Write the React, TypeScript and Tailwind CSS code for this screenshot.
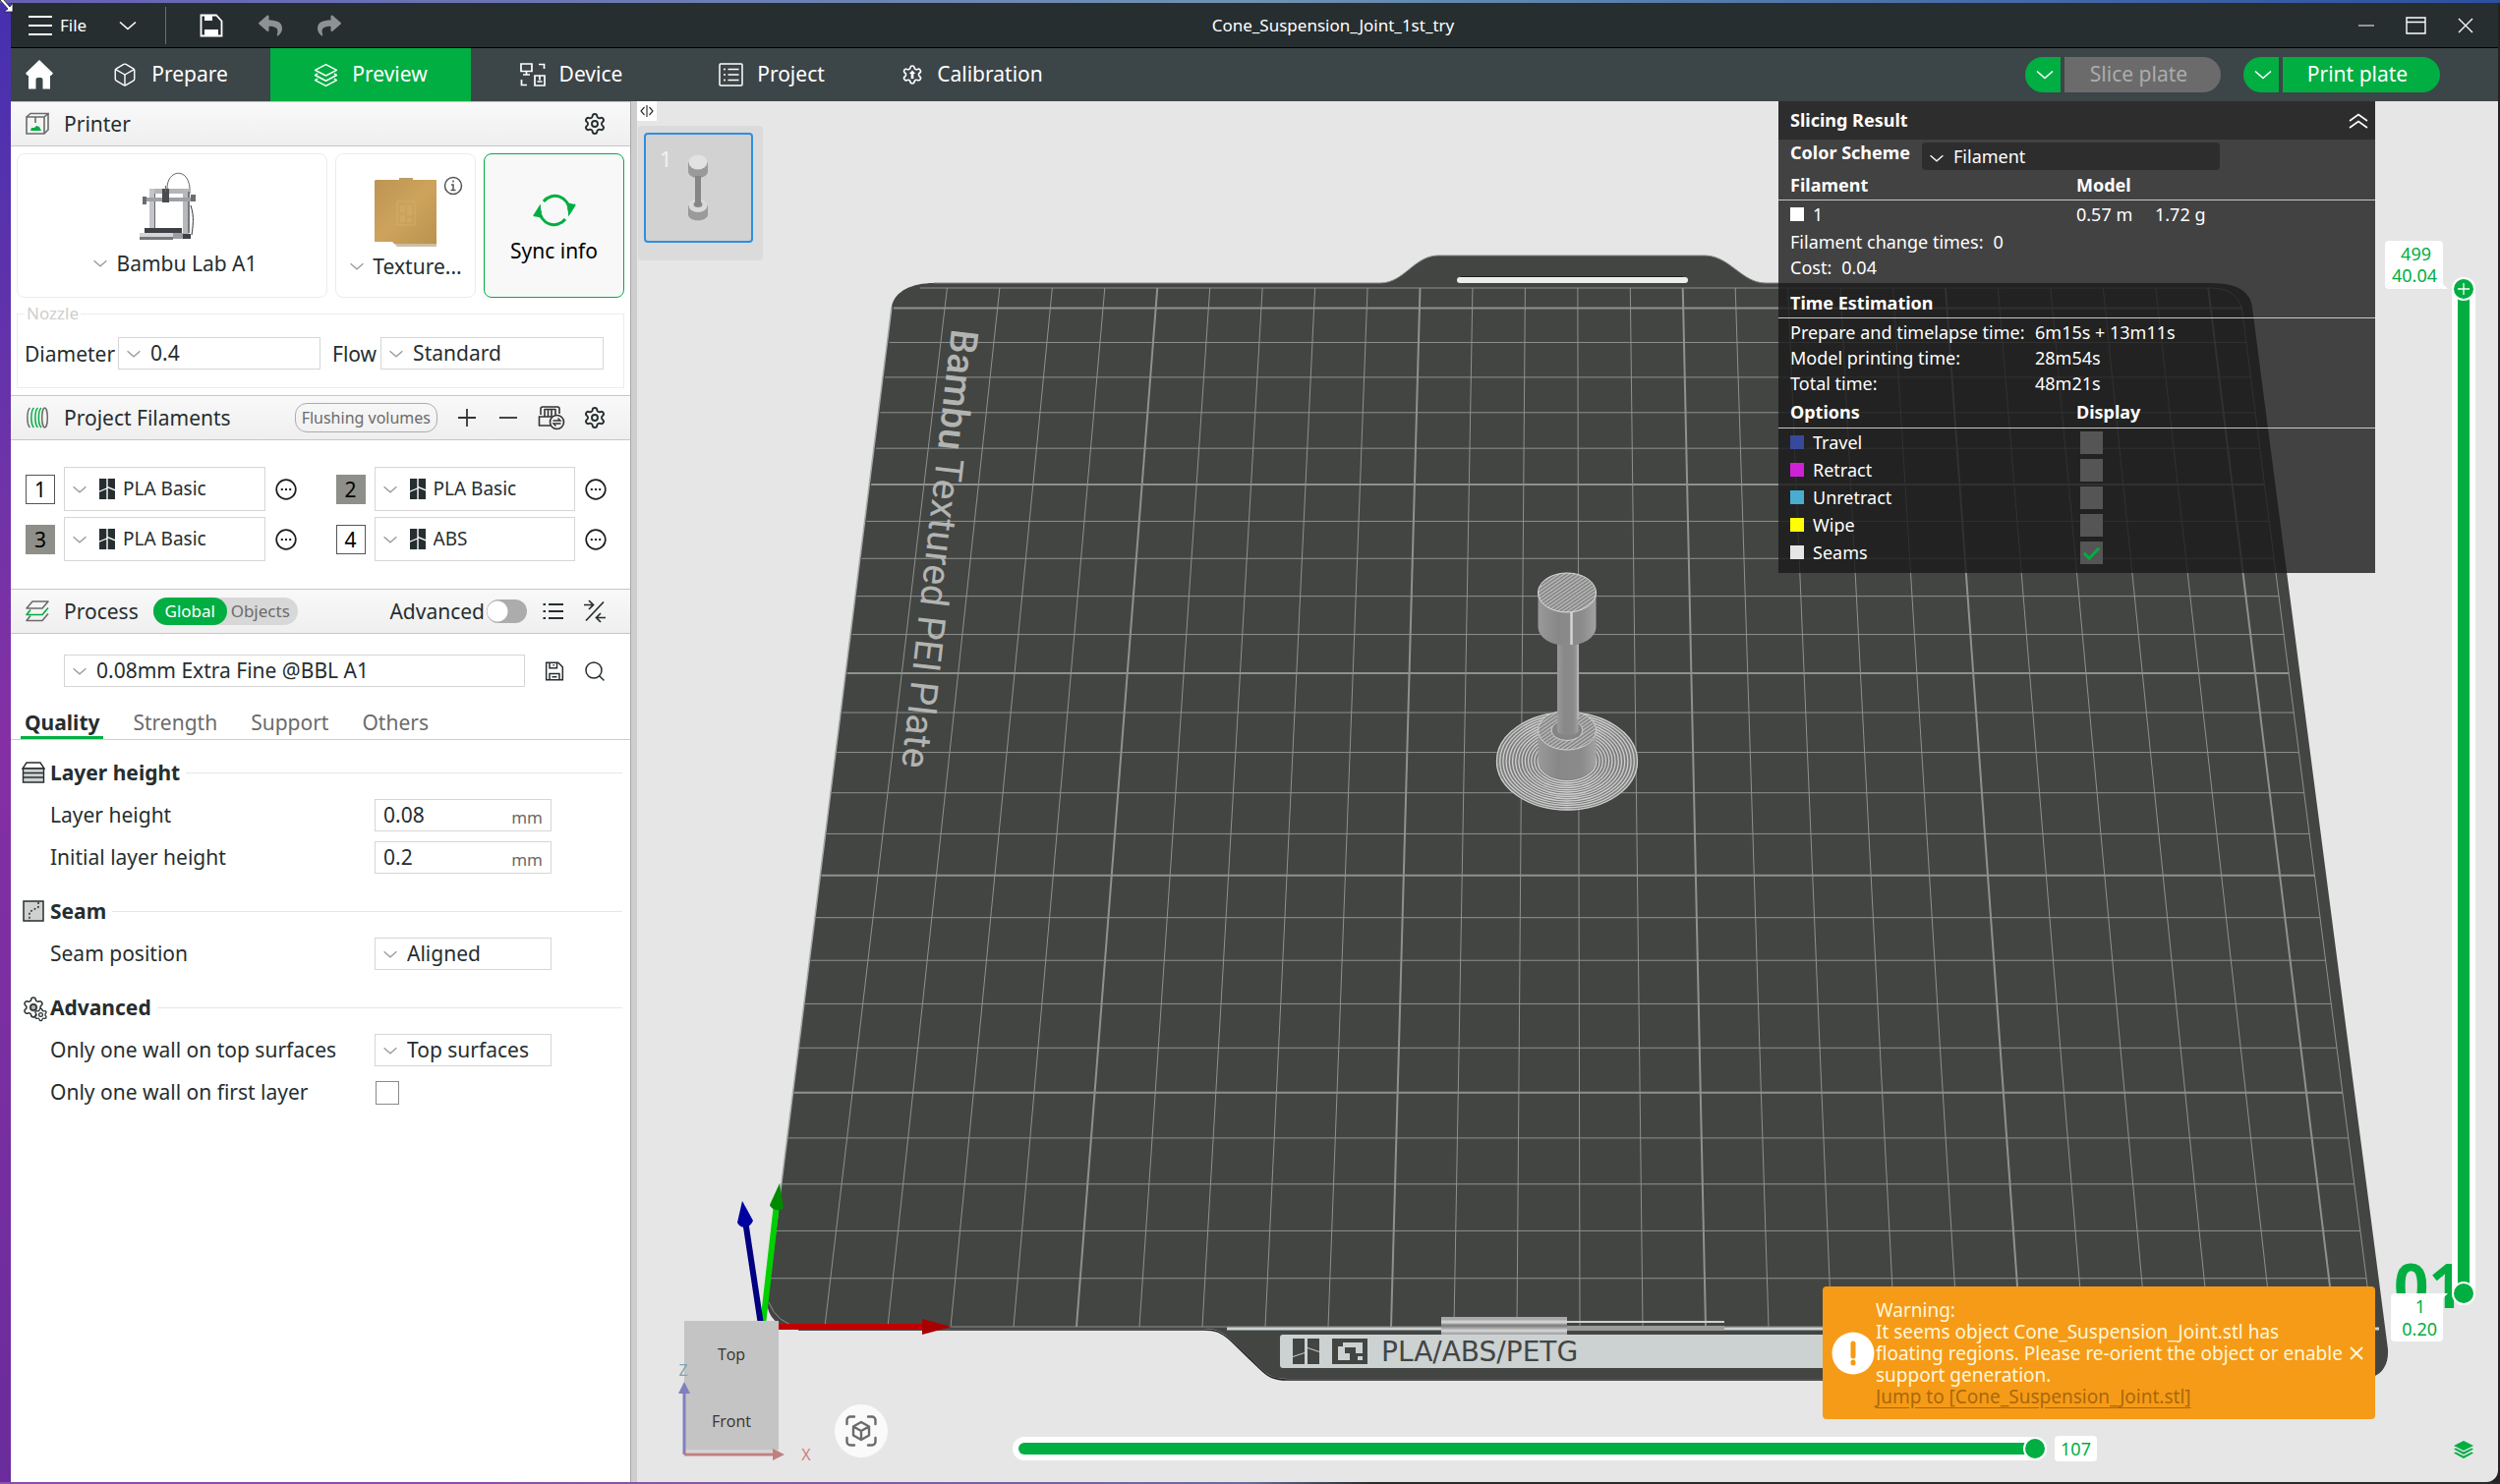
import { useState, type ReactNode } from "react";
import { Box, Search, Settings } from "lucide-react";
import { FaReply, FaShare } from "react-icons/fa";
import clsx from "clsx";

type IconProps = { className?: string };

function ChevronIcon({ className }: IconProps) {
  return (
    <svg viewBox="0 0 18 10" className={className} fill="none" stroke="currentColor" strokeWidth={1.6}>
      <path d="M1 1.5 9 8.5 17 1.5" />
    </svg>
  );
}

function FloppyIcon({ className }: IconProps) {
  return (
    <svg viewBox="0 0 24 24" className={className} fill="none" stroke="currentColor" strokeWidth={1.8}>
      <path d="M2 1.5h14.5L22 7v15.5H2zM6 1.5V8h9V1.5M6 22.5V15h12v7.5" />
      <path d="M11 3.5v2M9 19h6" />
    </svg>
  );
}

function HomeIcon({ className }: IconProps) {
  return (
    <svg viewBox="0 0 28 30" className={className} fill="currentColor">
      <path d="M14 0 28 13.500 26 16h-1v13.500h-7.500V20a2 2 0 0 0-2-2h-3a2 2 0 0 0-2 2v9.500H3V16H2L0 13.500z" />
    </svg>
  );
}

function LayersIcon({ className }: IconProps) {
  return (
    <svg viewBox="0 0 24 24" className={className} fill="none" stroke="currentColor" strokeWidth={1.4} strokeLinejoin="round">
      <path d="M12 1.500 22.500 7 12 12.500 1.500 7z" />
      <path d="M4 10.500 1.500 12 12 17.500 22.500 12 20 10.500M4 15.500 1.500 17 12 22.500 22.500 17 20 15.500" />
    </svg>
  );
}

function DeviceIcon({ className }: IconProps) {
  return (
    <svg viewBox="0 0 26 24" className={className} fill="none" stroke="currentColor" strokeWidth={1.7}>
      <path d="M1 1h11v7.500H1zM6.500 8.500V12M3 12h7M19 1.500h5.500V6M1.500 17v5.500H7M15 13h10v10H15zM20 13v4.500M17.500 19h5" />
    </svg>
  );
}

function ProjectIcon({ className }: IconProps) {
  return (
    <svg viewBox="0 0 25 24" className={className} fill="none" stroke="currentColor" strokeWidth={1.5}>
      <rect x="1" y="1" width="23" height="22" rx="1" />
      <path d="M9.500 6.500h11M9.500 12h11M9.500 17.500h11M5 6.500h2M5 12h2M5 17.500h2" />
    </svg>
  );
}

function CalibrationIcon({ className }: IconProps) {
  return (
    <svg viewBox="0 0 24 24" className={className} fill="none" stroke="currentColor" strokeWidth={1.8} strokeLinejoin="round">
      <path d="M9.700 4.100a2.340 2.340 0 0 1 4.600 0 2.340 2.340 0 0 0 3.400 1.900 2.340 2.340 0 0 1 2.300 4.100 2.340 2.340 0 0 0 0 3.800 2.340 2.340 0 0 1-2.300 4.100 2.340 2.340 0 0 0-3.400 1.900 2.340 2.340 0 0 1-4.600 0A2.340 2.340 0 0 0 6.300 18 2.340 2.340 0 0 1 4 13.900a2.340 2.340 0 0 0 0-3.800A2.340 2.340 0 0 1 6.300 6a2.340 2.340 0 0 0 3.400-1.900" />
      <path d="M12 16.500V10" strokeWidth={3} />
      <path d="M12 7l3.500 4h-7z" fill="currentColor" stroke="none" />
    </svg>
  );
}

function PrinterIcon({ className }: IconProps) {
  return (
    <svg viewBox="0 0 24 24" className={className} fill="none" stroke="#6b6b6b" strokeWidth={1.6}>
      <path d="M1 5h18v17H1zM1 5l4-3.500h18L19 5M23 1.500V18l-4 4M10 5v6" />
      <path d="M5 19h11l-2-4-3-1-2 2H6z" fill="#00ae42" stroke="none" />
    </svg>
  );
}

function FilamentsIcon({ className }: IconProps) {
  return (
    <svg viewBox="0 0 24 24" className={className} fill="none" strokeWidth={1.5}>
      <path d="M4.500 2C1 5 1 19 4.500 22" stroke="#6b6b6b" />
      <path d="M8.500 2C5 5 5 19 8.500 22M12.500 2C9 5 9 19 12.500 22M16 2c-3.500 3-3.500 17 0 20" stroke="#00ae42" />
      <ellipse cx="19.500" cy="12" rx="2.800" ry="10" stroke="#6b6b6b" />
    </svg>
  );
}

function ProcessIcon({ className }: IconProps) {
  return (
    <svg viewBox="0 0 24 22" className={className} fill="none" strokeWidth={1.6} strokeLinejoin="round">
      <path d="M7 1h16l-6 7H1z" stroke="#6b6b6b" />
      <path d="M5 9.500 1 14.500h16l6-7" stroke="#00ae42" />
      <path d="M5 15.500 1 20.500h16l6-7" stroke="#6b6b6b" />
    </svg>
  );
}

function AmsIcon({ className }: IconProps) {
  return (
    <svg viewBox="0 0 28 26" className={className} fill="none" stroke="#333" strokeWidth={1.6}>
      <path d="M3 10V4a2 2 0 0 1 2-2h15a2 2 0 0 1 2 2v5M7 4.500h11M7 4v8M10.500 4v8M14 4v8M18 4v6M14 21H1.500V12H14" />
      <circle cx="19.500" cy="17.500" r="7" />
      <path d="M15.500 16h7.500l-2.500-2.500M23.500 19H16l2.500 2.500" strokeWidth={1.4} />
    </svg>
  );
}

function MoreIcon({ className }: IconProps) {
  return (
    <svg viewBox="0 0 22 22" className={className} fill="none" stroke="#1e1e1e" strokeWidth={1.7}>
      <circle cx="11" cy="11" r="9.800" />
      <path d="M5.800 11h2M10 11h2M14.200 11h2" strokeWidth={2} />
    </svg>
  );
}

function ListIcon({ className }: IconProps) {
  return (
    <svg viewBox="0 0 22 20" className={className} fill="none" stroke="#262e30" strokeWidth={1.8}>
      <path d="M6 3h15M6 10h15M6 17h15M.5 3h2.500M.5 10h2.500M.5 17h2.500" />
    </svg>
  );
}

function CompareIcon({ className }: IconProps) {
  return (
    <svg viewBox="0 0 24 24" className={className} fill="none" stroke="#262e30" strokeWidth={1.7}>
      <path d="M21 2.500 3 21.500M1 5.500h9M6 1l4.500 4.500L6 10M23 18.500h-9M18 14l-4.500 4.500L18 23" />
    </svg>
  );
}

function BambuMark({ className }: IconProps) {
  return (
    <svg viewBox="0 0 16 21" className={className} fill="#262e30">
      <path d="M0 0h7.300v9.500L0 12.500zM0 13.800l7.300-3V21H0zM8.700 0H16v11L8.700 8zM8.700 9.500 16 12.500V21H8.700z" />
    </svg>
  );
}

function SyncIcon({ className }: IconProps) {
  return (
    <svg viewBox="0 0 44 38" className={className} fill="none" stroke="#00ae42" strokeWidth={3}>
      <path d="M11 10a14.500 14.500 0 0 1 26 9" />
      <path d="M33 28a14.500 14.500 0 0 1-26-9" />
      <path d="M43 13l-6 9.500-1-11M1 25l6-9.500 1 11" strokeWidth={2} fill="#00ae42" />
    </svg>
  );
}

function PrinterPicture({ className }: IconProps) {
  return (
    <svg viewBox="0 0 58 70" className={className}>
      <path d="M29 18C28-4 54-6 52 22" fill="none" stroke="#666" strokeWidth="1" />
      <path d="M53 34c4 12 2 22 1 30" fill="none" stroke="#333" strokeWidth="1" />
      <path d="M11 17h41v5H11z" fill="#b4b5b9" />
      <path d="M11 17h5v42h-5z" fill="#c4c5c9" />
      <path d="M16 22h1v36h-1z" fill="#66676b" />
      <path d="M45 17h6v46h-6z" fill="#b7b8bc" />
      <path d="M50 20h2v42h-2z" fill="#77787d" />
      <path d="M5 26h50v4H5z" fill="#9fa0a5" />
      <path d="M24 17h7v14h-7z" fill="#4a4b50" />
      <path d="M27 14h1v6h-1zM4 25h4v8H4zM53 23h5v7h-5z" fill="#6b6c70" />
      <path d="M6 57h38v5H6zM34 57h10v6H34zM43 63h10v5H43z" fill="#3e4045" />
      <path d="M1 62h34v6H1z" fill="#d3d4d8" />
      <path d="M1 66h34v3H1z" fill="#76777c" />
      <path d="M35 62h10v6H35z" fill="#9c9da2" />
    </svg>
  );
}

function PlatePicture({ className }: IconProps) {
  return (
    <svg viewBox="0 0 64 70" className={className}>
      <defs>
        <linearGradient id="pei" x1="0" y1="0" x2="1" y2="1">
          <stop offset="0" stopColor="#bd9452" />
          <stop offset=".5" stopColor="#cda35c" />
          <stop offset="1" stopColor="#bb924f" />
        </linearGradient>
      </defs>
      <path d="M25 0h14v4H25z" fill="#b99e6c" />
      <path d="M1 2h62v65H20l-2-2H0V3z" fill="url(#pei)" />
      <path d="M20 67h43v3H23z" fill="#cbbfa6" />
      <path d="M23 24h18v24H23z" fill="none" stroke="#d3ad6a" strokeWidth="1" />
      <path d="M26 28h5v7h-5zM33 28h5v10h-5zM26 38h5v7h-5zM33 41h5v4h-5z" fill="#d0a864" />
    </svg>
  );
}

/* ---------- form bits ---------- */

type PickProps = {
  label: string;
  value: string;
  className?: string;
  mark?: boolean;
};

function Pick({ label, value, className, mark }: PickProps) {
  return (
    <div className={clsx("relative", className)}>
      <select
        aria-label={label}
        className={clsx(
          "h-full w-full appearance-none border border-[#d6d6d6] bg-white pb-0.5 text-[#262e30] outline-none",
          mark ? "pl-[59px] text-[19px]" : "pl-8 text-[21px]",
        )}
      >
        <option>{value}</option>
      </select>
      <span className="pointer-events-none absolute inset-y-0 left-2 flex items-center gap-3">
        <ChevronIcon className="h-2 w-4 text-[#9a9a9a]" />
        {mark && <BambuMark className="h-[21px] w-4" />}
      </span>
    </div>
  );
}

function PanelHeader({ icon, title, children }: { icon: ReactNode; title: string; children?: ReactNode }) {
  return (
    <div className="flex h-[46px] items-center border-y border-[#c6c6c6] bg-linear-to-b from-[#f9f9f9] to-[#efefef] pr-6 pl-[15px]">
      {icon}
      <h2 className="ml-[15px]">{title}</h2>
      {children}
    </div>
  );
}

function Filament({ slot, name, dark }: { slot: number; name: string; dark?: boolean }) {
  return (
    <div className="flex h-[45px] items-center">
      <span
        className={clsx(
          "flex size-[30px] items-center justify-center border text-black",
          dark ? "border-[#8e8f88] bg-[#8e8f88]" : "border-[#555] bg-white",
        )}
      >
        {slot}
      </span>
      <Pick label={`Filament ${slot}`} value={name} mark className="ml-[9px] h-full flex-1" />
      <button type="button" aria-label={`Edit filament ${slot}`} className="ml-2.5">
        <MoreIcon className="size-[22px]" />
      </button>
    </div>
  );
}

function GroupTitle({ icon, title }: { icon: ReactNode; title: string }) {
  return (
    <div className="mb-1.5 flex h-8 items-center">
      <span className="flex w-[29px]">{icon}</span>
      <h3 className="font-bold">{title}</h3>
      <div className="ml-1.5 h-px flex-1 bg-[#e6e6e6]" />
    </div>
  );
}

function SettingRow({ label, htmlFor, children }: { label: string; htmlFor?: string; children: ReactNode }) {
  return (
    <div className="flex h-[43px] items-center">
      <label htmlFor={htmlFor} className="w-[359px] pb-0.5 pl-[29px]">
        {label}
      </label>
      {children}
    </div>
  );
}

function NumberField({ id, value }: { id: string; value: string }) {
  return (
    <div className="flex h-[33px] w-[180px] items-center border border-[#d6d6d6] pr-2 pl-2">
      <input id={id} defaultValue={value} className="w-full min-w-0 flex-1 pb-0.5 outline-none" />
      <span className="pt-1 text-[17px] text-[#6b6b6b]">mm</span>
    </div>
  );
}

/* ---------- top bars ---------- */

function TitleBar() {
  return (
    <header className="flex h-[46px] items-center border-b border-black bg-[#262e30] text-white">
      <div className="flex w-[360px] items-center">
        <button type="button" className="ml-[18px] flex items-center gap-2 text-[17px]">
          <svg viewBox="0 0 24 20" className="h-5 w-6" stroke="currentColor" strokeWidth={2}>
            <path d="M0 1h24M0 10h24M0 19h24" />
          </svg>
          File
        </button>
        <button type="button" aria-label="More menus" className="ml-[33px]">
          <ChevronIcon className="h-2.5 w-[18px]" />
        </button>
        <div className="ml-[29px] h-[38px] w-px bg-[#6b7072]" />
        <button type="button" aria-label="Save" className="ml-[34px]">
          <svg viewBox="0 0 24 24" className="size-6" fill="none" stroke="currentColor" strokeWidth={1.8}>
            <path d="M1.500 1.500H17l5.500 6v15h-21z" />
            <path d="M5 2h8v5H5zM5 16h14v6H5z" fill="currentColor" stroke="none" />
          </svg>
        </button>
        <button type="button" aria-label="Undo" className="ml-9 text-[#8e9294]">
          <FaReply size={24} />
        </button>
        <button type="button" aria-label="Redo" className="ml-9 text-[#8e9294]">
          <FaShare size={24} />
        </button>
      </div>
      <h1 className="flex-1 text-center text-[17px]">Cone_Suspension_Joint_1st_try</h1>
      <div className="flex w-[200px] items-center gap-8 pl-[58px]">
        <button type="button" aria-label="Minimize">
          <svg viewBox="0 0 16 16" className="size-4" stroke="currentColor">
            <path d="M0 8h16" />
          </svg>
        </button>
        <button type="button" aria-label="Maximize">
          <svg viewBox="0 0 21 18" className="h-[18px] w-[21px]" fill="none" stroke="currentColor" strokeWidth={1.4}>
            <path d="M1 1h19v16H1zM1 5.500h19" />
          </svg>
        </button>
        <button type="button" aria-label="Close">
          <svg viewBox="0 0 16 16" className="size-4" stroke="currentColor" strokeWidth={1.3}>
            <path d="M1 1l14 14M15 1 1 15" />
          </svg>
        </button>
      </div>
    </header>
  );
}

const navTabs = [
  { name: "Prepare", icon: <Box className="size-[26px]" strokeWidth={1.3} /> },
  { name: "Preview", icon: <LayersIcon className="size-[25px]" /> },
  { name: "Device", icon: <DeviceIcon className="h-6 w-[26px]" /> },
  { name: "Project", icon: <ProjectIcon className="h-6 w-[25px]" /> },
  { name: "Calibration", icon: <CalibrationIcon className="size-[22px]" /> },
];

function NavBar() {
  return (
    <nav className="flex h-[54px] items-center bg-[#3c4547] text-[21px] text-white">
      <button type="button" aria-label="Home" className="w-[60px] pl-[15px]">
        <HomeIcon className="h-[30px] w-7" />
      </button>
      {navTabs.map((tab) => (
        <button
          key={tab.name}
          type="button"
          className={clsx(
            "flex h-full w-[204px] items-center justify-center gap-3.5",
            tab.name === "Preview" && "bg-[#00ae42]",
          )}
        >
          {tab.icon}
          {tab.name}
        </button>
      ))}
      <div className="mr-[59px] ml-auto flex h-9 gap-[23px]">
        <div className="flex gap-1">
          <button type="button" aria-label="Slice options" className="flex w-9 items-center justify-center rounded-l-full bg-[#00ae42] pl-1">
            <ChevronIcon className="h-2.5 w-5" />
          </button>
          <button type="button" disabled className="w-[159px] rounded-r-full bg-[#6b6b6b] pr-2 text-[#acacac]">
            Slice plate
          </button>
        </div>
        <div className="flex gap-1">
          <button type="button" aria-label="Print options" className="flex w-9 items-center justify-center rounded-l-full bg-[#00ae42] pl-1">
            <ChevronIcon className="h-2.5 w-5" />
          </button>
          <button type="button" className="w-40 rounded-r-full bg-[#00ae42] pr-2">
            Print plate
          </button>
        </div>
      </div>
    </nav>
  );
}

/* ---------- sidebar ---------- */

const processTabs = ["Quality", "Strength", "Support", "Others"];

function Sidebar() {
  const [processTab, setProcessTab] = useState("Quality");

  return (
    <aside className="w-[631px] shrink-0 border-r border-[#a8a8a8] bg-white text-[21px] leading-7 text-[#262e30]">
      <PanelHeader icon={<PrinterIcon className="size-6" />} title="Printer">
        <button type="button" aria-label="Printer settings" className="ml-auto">
          <Settings className="size-6" strokeWidth={1.9} />
        </button>
      </PanelHeader>

      <div className="flex h-[154px] gap-2 px-1.5 pt-[7px]">
        <button type="button" className="flex flex-1 flex-col items-center rounded-lg border border-[#ececec] pt-[18px]">
          <PrinterPicture className="mr-2.5 h-[70px] w-[58px]" />
          <span className="mt-[9px] ml-1.5 flex items-center gap-2">
            <ChevronIcon className="h-2 w-4 text-[#9a9a9a]" />
            Bambu Lab A1
          </span>
        </button>
        <button type="button" className="relative flex w-[143px] flex-col items-center rounded-lg border border-[#ececec] pt-6">
          <PlatePicture className="h-[70px] w-16" />
          <svg viewBox="0 0 20 20" className="absolute top-[22px] right-3 size-5" fill="none" stroke="#555" strokeWidth={1.5}>
            <circle cx="10" cy="10" r="8.500" />
            <path d="M10 4.500v2M8 9h2v5M7.500 14.500h5" />
          </svg>
          <span className="mt-1.5 flex items-center gap-2">
            <ChevronIcon className="h-2 w-4 text-[#9a9a9a]" />
            Texture...
          </span>
        </button>
        <button type="button" className="flex w-[143px] flex-col items-center rounded-lg border border-[#00ae42] bg-[#f8f8f8] pt-[38px] text-black">
          <SyncIcon className="h-[38px] w-11" />
          <span className="mt-2">Sync info</span>
        </button>
      </div>

      <fieldset className="mx-1.5 mt-1 mb-[7px] h-[88px] border border-[#ececec] pl-[7px]">
        <legend className="px-0.5 text-[17px] leading-6 text-[#cecece]">Nozzle</legend>
        <div className="flex items-center pt-3">
          <span className="w-[95px]">Diameter</span>
          <Pick label="Diameter" value="0.4" className="h-[33px] w-[206px]" />
          <span className="mr-1 ml-3">Flow</span>
          <Pick label="Flow" value="Standard" className="mr-5 h-[33px] flex-1" />
        </div>
      </fieldset>

      <PanelHeader icon={<FilamentsIcon className="size-6" />} title="Project Filaments">
        <button type="button" className="ml-auto h-[30px] rounded-xl border border-[#acacac] px-1.5 text-[16px] text-[#6b6b6b]">
          Flushing volumes
        </button>
        <button type="button" aria-label="Add filament" className="ml-5">
          <svg viewBox="0 0 20 20" className="size-5" stroke="#333" strokeWidth={1.8}>
            <path d="M1 10h18M10 1v18" />
          </svg>
        </button>
        <button type="button" aria-label="Remove filament" className="ml-[22px]">
          <svg viewBox="0 0 20 20" className="size-5" stroke="#333" strokeWidth={1.8}>
            <path d="M1 10h18" />
          </svg>
        </button>
        <button type="button" aria-label="Sync filaments" className="ml-5">
          <AmsIcon className="h-[26px] w-7" />
        </button>
        <button type="button" aria-label="Filament settings" className="ml-[18px]">
          <Settings className="size-6" strokeWidth={1.9} />
        </button>
      </PanelHeader>

      <div className="grid grid-cols-2 gap-x-10 gap-y-1.5 pt-[27px] pr-6 pb-7 pl-[15px]">
        <Filament slot={1} name="PLA Basic" />
        <Filament slot={2} name="PLA Basic" dark />
        <Filament slot={3} name="PLA Basic" dark />
        <Filament slot={4} name="ABS" />
      </div>

      <PanelHeader icon={<ProcessIcon className="h-[22px] w-6" />} title="Process">
        <div className="ml-[15px] flex h-7 rounded-full bg-[#d8d8d8] text-[17px]">
          <button type="button" className="w-[75px] rounded-full bg-[#00ae42] text-white">
            Global
          </button>
          <button type="button" className="w-[72px] pr-1">
            <span className="text-[#6b6b6b]">Objects</span>
          </button>
        </div>
        <label htmlFor="advanced" className="ml-auto">
          Advanced
        </label>
        <input
          id="advanced"
          type="checkbox"
          role="switch"
          className="ml-0.5 h-6 w-[41px] appearance-none rounded-full bg-[#acacac] bg-[radial-gradient(circle_at_11px_12px,white_10px,transparent_11px)]"
        />
        <button type="button" aria-label="Compare list" className="ml-4">
          <ListIcon className="h-5 w-[22px]" />
        </button>
        <button type="button" aria-label="Compare presets" className="ml-[19px]">
          <CompareIcon className="size-6" />
        </button>
      </PanelHeader>

      <div className="flex items-center pt-[21px] pr-6 pl-[54px]">
        <Pick label="Process preset" value="0.08mm Extra Fine @BBL A1" className="h-[33px] flex-1" />
        <button type="button" aria-label="Save preset" className="ml-5">
          <FloppyIcon className="size-5" />
        </button>
        <button type="button" aria-label="Search settings" className="ml-[19px]">
          <Search className="size-6" strokeWidth={1.5} />
        </button>
      </div>

      <div className="flex h-[54px] items-end gap-[26px] border-b border-[#cecece] pl-2.5">
        {processTabs.map((name) => (
          <button
            key={name}
            type="button"
            onClick={() => setProcessTab(name)}
            className={clsx(
              "border-b-[3px] px-1 leading-7",
              name === processTab ? "border-[#00ae42] font-bold" : "border-transparent text-[#6b6b6b]",
            )}
          >
            {name}
          </button>
        ))}
      </div>

      <div className="flex flex-col gap-[17px] pt-[17px] pr-2 pl-[11px]">
        <section>
          <GroupTitle
            title="Layer height"
            icon={
              <svg viewBox="0 0 24 22" className="h-[22px] w-6" fill="#d0d0d0" stroke="#262e30" strokeWidth={1.4}>
                <path d="M5 1h14l4 6H1z" fill="#fff" />
                <path d="M1.500 7h21v4.500h-21zM1.500 11.500h21V16h-21zM1.500 16h21v5h-21z" />
              </svg>
            }
          />
          <SettingRow label="Layer height" htmlFor="layer-height">
            <NumberField id="layer-height" value="0.08" />
          </SettingRow>
          <SettingRow label="Initial layer height" htmlFor="initial-layer-height">
            <NumberField id="initial-layer-height" value="0.2" />
          </SettingRow>
        </section>

        <section>
          <GroupTitle
            title="Seam"
            icon={
              <svg viewBox="0 0 22 22" className="ml-px size-[22px]" fill="#d0d0d0" stroke="#262e30" strokeWidth={1.5}>
                <rect x="1" y="1" width="20" height="20" />
                <path d="M16 2v5l-9 5v9" fill="none" strokeDasharray="2 2" />
              </svg>
            }
          />
          <SettingRow label="Seam position">
            <Pick label="Seam position" value="Aligned" className="h-[33px] w-[180px]" />
          </SettingRow>
        </section>

        <section>
          <GroupTitle
            title="Advanced"
            icon={
              <span className="relative flex">
                <svg viewBox="0 0 24 24" className="size-6">
                  <circle cx="12" cy="12" r="4.500" fill="#b0b0b0" />
                  <Settings size={24} strokeWidth={1.5} />
                </svg>
                <Settings className="absolute top-3 left-3 size-[15px] fill-white" strokeWidth={2} />
              </span>
            }
          />
          <SettingRow label="Only one wall on top surfaces">
            <Pick label="Only one wall on top surfaces" value="Top surfaces" className="h-[33px] w-[180px]" />
          </SettingRow>
          <SettingRow label="Only one wall on first layer" htmlFor="one-wall-first">
            <input id="one-wall-first" type="checkbox" className="ml-px size-6 appearance-none border border-[#8a8a8a] bg-white" />
          </SettingRow>
        </section>
      </div>
    </aside>
  );
}

/* ---------- 3D scene ---------- */

const PLATE_TOP = 293;
const PLATE_BOTTOM = 1350;
const PLATE_UNITS = 25.6;

// screen x of grid column i on the far and the near edge
const farX = (i: number) => 910 + 53.45 * i;
const nearX = (i: number) => 775 + 64 * i;

// screen y of grid row i, counted from the near edge
const rowY = (i: number) => {
  const v = PLATE_UNITS - i;
  return (292.7 + 32.6 * v) / (1 - 0.00644 * v);
};

const xAt = (i: number, y: number) => {
  const t = (y - PLATE_TOP) / (PLATE_BOTTOM - PLATE_TOP);
  return farX(i) + t * (nearX(i) - farX(i));
};

const gridLines = Array.from({ length: 25 }, (_, i) => i + 1);
const brim = Array.from({ length: 14 }, (_, i) => i);

function Scene() {
  return (
    <svg viewBox="648 103 1893 1405" className="absolute inset-0 size-full">
      <defs>
        <pattern id="infill" width="3" height="3" patternUnits="userSpaceOnUse" patternTransform="rotate(-35)">
          <rect width="3" height="3" fill="#b9b9b9" />
          <rect width="3" height="1.300" fill="#787878" />
        </pattern>
        <linearGradient id="wall" x1="0" x2="1">
          <stop offset="0" stopColor="#999" />
          <stop offset=".35" stopColor="#888" />
          <stop offset=".75" stopColor="#8b8b8b" />
          <stop offset="1" stopColor="#a2a2a2" />
        </linearGradient>
      </defs>

      <path
        d="M950 288H1404C1428 288 1438 261 1462 260H1735C1760 261 1772 288 1796 288H2247C2272 288 2289 294 2291 313L2429 1373C2430 1392 2420 1403 2402 1403H1310C1296 1403 1290 1400 1282 1392L1252 1363C1242 1354 1236 1352 1225 1352H812C792 1352 780 1340 780 1323L907 312C910 296 928 288 950 288Z"
        fill="#434543"
      />
      <path d="M907 312 780 1323" stroke="#a6aaaa" strokeWidth="1.500" />
      <path d="M950 288H1404C1428 288 1438 261 1462 260H1735C1760 261 1772 288 1796 288H1809" fill="none" stroke="#858886" />
      <path d="M812 1353H1225C1236 1353 1242 1355 1252 1364L1282 1393C1290 1401 1296 1404 1310 1404H2400" fill="none" stroke="#222" strokeWidth="1.500" />
      <rect x="1482" y="282" width="235" height="6" rx="3" fill="#eceeee" />
      <path d="M1486 281.500h226" stroke="#1f201f" />

      <g fill="none" stroke="#8f9190">
        {gridLines.map((i) => (
          <path key={i} d={`M${farX(i)} ${PLATE_TOP}L${nearX(i)} ${PLATE_BOTTOM}`} strokeWidth={i % 5 ? 1 : 2} />
        ))}
        {gridLines.map((i) => {
          const y = rowY(i);
          return <path key={i} d={`M${xAt(0.03, y)} ${y}H${xAt(PLATE_UNITS, y)}`} strokeWidth={i % 5 ? 1 : 2} />;
        })}
        <path d={`M936 293H2250Q2278 294 2281 318L${xAt(PLATE_UNITS, 1350)} 1350H812Q790 1346 782 1325`} />
      </g>

      <text transform="translate(968 334) rotate(96.500)" fontFamily="Roboto, sans-serif" fontSize="39" fill="#b2b4b2">
        <tspan fontWeight="500">Bambu</tspan> Textured PEI Plate
      </text>

      {/* front label strip */}
      <path d="M1248 1352H2420" stroke="#ccd1d2" strokeWidth="3" />
      <rect x="1302" y="1358" width="1100" height="34" rx="3" fill="#ccd1d2" />
      <path d="M1466 1340h128v18h-128z" fill="#a9a9a9" />
      <path d="M1466 1345h128M1466 1354h128" stroke="#d0d0d0" strokeWidth="3" />
      <path d="M1466 1349h128" stroke="#858585" strokeWidth="3" />
      <path d="M1594 1345h160" stroke="#d0d0d0" strokeWidth="2" />
      <path d="M1594 1351.500h160" stroke="#9a9c9a" strokeWidth="5" />
      <path d="M1315 1362h12v14l-12 4zM1315 1381l12-4v11h-12zM1330 1362h12v13l-12-4zM1330 1372l12 4v12h-12z" fill="#434543" />
      <path d="M1355 1362h36v26h-36z" fill="#434543" />
      <path d="M1366 1366h20v11h-7v7h-18v-14h5z" fill="#ccd1d2" />
      <path d="M1368 1371h11v13h-6v-7h-5z" fill="#434543" />
      <path d="M1381 1380h5v4h-5z" fill="#ccd1d2" />
      <text x="1405" y="1385" fontFamily="'DejaVu Sans', sans-serif" fontSize="28" fill="#434543">
        PLA/ABS/PETG
      </text>

      {/* model with brim */}
      <ellipse cx="1594" cy="774.500" rx="72" ry="50" fill="#7d7d7d" />
      {brim.map((i) => (
        <ellipse key={i} cx="1594" cy="774.500" rx={71.5 - i * 3.2} ry={49.5 - i * 2.25} fill="none" stroke="#cfcfcf" strokeWidth="1.300" />
      ))}
      <path d="M1564.500 743V773A29.500 20 0 0 0 1623.500 773V743Z" fill="url(#wall)" />
      <ellipse cx="1594" cy="743" rx="29.500" ry="20" fill="url(#infill)" stroke="#d0d0d0" />
      <ellipse cx="1594" cy="743" rx="16" ry="10.500" fill="#858585" stroke="#cfcfcf" />
      <path d="M1584 650V744A11 5 0 0 0 1605.500 744V650Z" fill="url(#wall)" />
      <path d="M1605 656V732" stroke="#c8c8c8" />
      <path d="M1564.500 603V638A29.500 19 0 0 0 1623.500 638V603Z" fill="url(#wall)" />
      <path d="M1598.500 622V656" stroke="#d4d4d4" strokeWidth="2.500" />
      <ellipse cx="1594" cy="603" rx="29.500" ry="20" fill="url(#infill)" stroke="#dedede" />

      {/* origin axes */}
      <path d="M776 1348 790 1225" stroke="#00d000" strokeWidth="6" />
      <path d="M793 1204 783 1226C785 1232 795 1233 797 1229Z" fill="#008a00" />
      <path d="M774 1348 758.500 1245" stroke="#000080" strokeWidth="6" />
      <path d="M755 1222 750 1244C753 1251 763 1250 766 1242Z" fill="#0000a0" />
      <path d="M780 1350H940" stroke="#c00000" strokeWidth="6" />
      <path d="M968 1350 938 1342V1358Z" fill="#a80000" />

      {/* view cube */}
      <rect x="696" y="1344" width="96" height="131" fill="#c4c4c4" />
      <path d="M696 1475h96v3h-96z" fill="#d4d4d4" />
      <g fontFamily="'Open Sans', sans-serif" fontSize="16" fill="#333" textAnchor="middle">
        <text x="744" y="1384">Top</text>
        <text x="744" y="1452">Front</text>
      </g>
      <path d="M696 1480V1412" stroke="#8080c0" strokeWidth="3" />
      <path d="M696 1406 690 1418H702Z" fill="#8080c0" />
      <path d="M696 1480H788" stroke="#c08080" strokeWidth="3" />
      <path d="M798 1480 786 1474V1486Z" fill="#c08080" />
      <g fontFamily="'Noto Sans', sans-serif" fontSize="16" textAnchor="middle">
        <text x="695" y="1400" fill="#7fa3b4">Z</text>
        <text x="820" y="1486" fill="#d08080">X</text>
      </g>

      <text x="2435" y="1331" fontFamily="'Noto Sans', sans-serif" fontSize="62" fontWeight="700" fill="#00ae42">
        01
      </text>
    </svg>
  );
}

/* ---------- overlays ---------- */

const timeRows = [
  ["Prepare and timelapse time:", "6m15s + 13m11s"],
  ["Model printing time:", "28m54s"],
  ["Total time:", "48m21s"],
];

const options = [
  { name: "Travel", swatch: "bg-[#38489b]" },
  { name: "Retract", swatch: "bg-[#cd22d6]" },
  { name: "Unretract", swatch: "bg-[#49adcf]" },
  { name: "Wipe", swatch: "bg-[#ffff00]" },
  { name: "Seams", swatch: "bg-[#e6e6e6]", shown: true },
];

function SlicingResult() {
  return (
    <section className="absolute top-0 right-[125px] w-[607px] bg-[rgba(25,25,25,0.8)] pb-1.5 text-[18px] text-white">
      <div className="flex h-[39px] items-center justify-between bg-[#2d2d2d] pr-[7px] pl-3">
        <h2 className="font-bold">Slicing Result</h2>
        <button type="button" aria-label="Collapse">
          <svg viewBox="0 0 20 16" className="h-4 w-5" fill="none" stroke="currentColor" strokeWidth={1.6}>
            <path d="M1 8l9-6.500L19 8M1 15l9-6.500L19 15" />
          </svg>
        </button>
      </div>
      <div className="flex h-[31px] items-end pl-3">
        <label htmlFor="scheme" className="w-[134px] pb-1.5 leading-6 font-bold">
          Color Scheme
        </label>
        <div className="relative">
          <select id="scheme" className="h-7 w-[303px] appearance-none rounded-sm bg-[#2d2d2d] pl-8 outline-none">
            <option>Filament</option>
          </select>
          <ChevronIcon className="pointer-events-none absolute top-3 left-[7px] h-2 w-4" />
        </div>
      </div>
      <div className="flex h-[31px] items-center border-b border-[#c8c8c8] pl-3 font-bold">
        <span className="w-[291px]">Filament</span>
        <span>Model</span>
      </div>
      <div className="flex h-[30px] items-center pb-0.5 pl-3">
        <span className="mr-[9px] size-3.5 bg-white" />
        <span className="w-[268px]">1</span>
        <span className="w-20">0.57 m</span>
        <span>1.72 g</span>
      </div>
      <div className="flex h-[26px] items-center gap-2.5 pb-0.5 pl-3">
        <span>Filament change times:</span>
        <span>0</span>
      </div>
      <div className="flex h-[26px] items-center gap-2.5 pb-0.5 pl-3">
        <span>Cost:</span>
        <span>0.04</span>
      </div>
      <div className="mt-2 mb-0.5 flex h-[30px] items-center border-b border-[#c8c8c8] pl-3 font-bold">Time Estimation</div>
      {timeRows.map(([label, value]) => (
        <div key={label} className="flex h-[26px] items-center pb-0.5 pl-3">
          <span className="w-[249px] whitespace-nowrap">{label}</span>
          <span>{value}</span>
        </div>
      ))}
      <div className="mb-px flex h-8 items-center border-b border-[#c8c8c8] pl-3 font-bold">
        <span className="w-[291px]">Options</span>
        <span>Display</span>
      </div>
      {options.map((option) => (
        <label key={option.name} className="flex h-7 items-center pb-0.5 pl-3">
          <span className={clsx("mr-[9px] size-3.5", option.swatch)} />
          <span className="w-[272px]">{option.name}</span>
          <span className="relative flex">
            <input type="checkbox" defaultChecked={option.shown} className="size-[23px] appearance-none bg-[#555]" />
            {option.shown && (
              <svg viewBox="0 0 24 24" className="pointer-events-none absolute inset-0 size-full" fill="none" stroke="#00ae42" strokeWidth={3}>
                <path d="M4 12l5.500 6L20 7" />
              </svg>
            )}
          </span>
        </label>
      ))}
    </section>
  );
}

function Warning() {
  return (
    <div role="alert" className="absolute right-[125px] bottom-16 flex h-[135px] w-[562px] items-center rounded-sm bg-[#f69b17] pl-[9px] text-[19px] leading-[22px] text-[#fff6dc]">
      <svg viewBox="0 0 44 44" className="mr-px size-11 shrink-0">
        <circle cx="22" cy="22" r="21.500" fill="#fff" />
        <path d="M22 12v13M22 31v1" stroke="#f69b17" strokeWidth="5" strokeLinecap="round" />
      </svg>
      <p className="whitespace-nowrap">
        Warning:
        <br />
        It seems object Cone_Suspension_Joint.stl has
        <br />
        floating regions. Please re-orient the object or enable
        <br />
        support generation.
        <br />
        <a href="#object" className="text-[#a9680c] underline underline-offset-4">
          Jump to [Cone_Suspension_Joint.stl]
        </a>
      </p>
      <button type="button" aria-label="Dismiss" className="mr-3 ml-auto">
        <svg viewBox="0 0 14 14" className="size-3.5" stroke="currentColor" strokeWidth={2}>
          <path d="M1 1l12 12M13 1 1 13" />
        </svg>
      </button>
    </div>
  );
}

function LayerSlider() {
  return (
    <>
      <div className="absolute top-[142px] right-14 h-[49px] w-[59px] rounded-sm bg-white pt-0.5 pr-1.5 text-right text-[18px] leading-[22px] text-[#00ae42]">
        <div className="pr-1.5">499</div>
        <div>40.04</div>
        <svg viewBox="0 0 6 6" className="absolute right-[-5px] bottom-0 size-1.5" fill="#fff">
          <path d="M0 0 6 6H0z" />
        </svg>
      </div>
      <div className="absolute right-14 bottom-[143px] h-[49px] w-[53px] rounded-sm bg-white pt-0.5 pr-1.5 text-right text-[18px] leading-[23px] text-[#00ae42]">
        <div className="pr-3">1</div>
        <div>0.20</div>
        <svg viewBox="0 0 6 6" className="absolute top-0 right-[-5px] size-1.5" fill="#fff">
          <path d="M0 6 6 0H0z" />
        </svg>
      </div>
      <div className="absolute top-[179px] right-[23px] bottom-[180px] flex w-6 justify-center rounded-full bg-white py-3">
        <div className="w-3 bg-[#00ae42]" />
        <svg viewBox="0 0 24 24" className="absolute top-0 left-0 size-6">
          <circle cx="12" cy="12" r="12" fill="#fff" />
          <circle cx="12" cy="12" r="10" fill="#00ae42" />
          <path d="M6 12h12M12 6v12" stroke="#fff" strokeWidth="1.300" />
        </svg>
        <svg viewBox="0 0 24 24" className="absolute bottom-0 left-0 size-6">
          <circle cx="12" cy="12" r="12" fill="#fff" />
          <circle cx="12" cy="12" r="10" fill="#00ae42" />
        </svg>
        <input
          type="range"
          aria-label="Layer"
          min={1}
          max={499}
          defaultValue={499}
          className="absolute inset-0 size-full opacity-0 [direction:rtl] [writing-mode:vertical-lr]"
        />
      </div>
    </>
  );
}

function MoveSlider() {
  return (
    <div className="absolute right-[408px] bottom-[21px] left-[382px] flex items-center gap-2">
      <div className="relative flex h-6 flex-1 items-center rounded-full bg-white pr-3 pl-1.5">
        <div className="h-3 flex-1 rounded-l-full bg-[#00ae42]" />
        <svg viewBox="0 0 24 24" className="absolute right-0 size-6">
          <circle cx="12" cy="12" r="12" fill="#fff" />
          <circle cx="12" cy="12" r="10" fill="#00ae42" />
        </svg>
        <input type="range" aria-label="Move" min={0} max={107} defaultValue={107} className="absolute inset-0 size-full opacity-0" />
      </div>
      <output className="w-[43px] rounded-sm bg-white text-center text-[18px] leading-[26px] text-[#00ae42]">107</output>
    </div>
  );
}

function PlateThumb() {
  return (
    <div className="absolute top-[25px] left-px h-[137px] w-[127px] rounded-sm bg-[#dbdbdb] pt-[7px] pl-1.5">
      <button type="button" className="relative h-28 w-[111px] rounded border-2 border-[#2f8ee0] bg-[#d2d2d2] text-left">
        <span className="absolute top-2 left-3.5 text-[22px] text-[#f2f2f2]">1</span>
        <svg viewBox="0 0 20 68" className="absolute top-5 left-[43px] h-[68px] w-5">
          <path d="M0 8v10c2 8 18 8 20 0V8z" fill="#9a9a9a" />
          <path d="M7 22h6v30H7z" fill="#858585" />
          <path d="M0 52v10c2 7 18 7 20 0V52z" fill="#9a9a9a" />
          <ellipse cx="10" cy="52" rx="9.500" ry="7" fill="#dadada" />
          <ellipse cx="10" cy="51" rx="4.500" ry="3" fill="#8a8a8a" />
          <path d="M7 40h6v12H7z" fill="#858585" />
          <ellipse cx="10" cy="8" rx="9.500" ry="7.500" fill="#e2e2e2" />
        </svg>
      </button>
    </div>
  );
}

function Viewport() {
  return (
    <main className="relative flex-1 overflow-hidden rounded-br-xl bg-[#e6e6e6]">
      <Scene />
      <button type="button" aria-label="Toggle sidebar" className="absolute top-0 left-0 flex size-5 items-center justify-center bg-white">
        <svg viewBox="0 0 14 12" className="h-3 w-3.5" fill="none" stroke="#333" strokeWidth={1.2}>
          <path d="M4.500 2 1 6l3.500 4M7 0v12M9.500 2 13 6l-3.500 4" />
        </svg>
      </button>
      <PlateThumb />
      <SlicingResult />
      <LayerSlider />
      <MoveSlider />
      <Warning />
      <button type="button" aria-label="Fit view" className="absolute bottom-[25px] left-[201px] flex size-[54px] items-center justify-center rounded-full bg-[#fafafa]">
        <svg viewBox="0 0 32 32" className="size-8" fill="none" stroke="#6b6b6b" strokeWidth={2.4} strokeLinecap="round" strokeLinejoin="round">
          <path d="M1.500 9V5a3.500 3.500 0 0 1 3.500-3.500h4M23 1.500h4A3.500 3.500 0 0 1 30.500 5v4M30.500 23v4a3.500 3.500 0 0 1-3.500 3.500h-4M9 30.500H5A3.500 3.500 0 0 1 1.500 27v-4" />
          <path d="M16 7l8 4.500v9L16 25l-8-4.500v-9zM8 11.500l8 4.500 8-4.500M16 16v9" />
        </svg>
      </button>
      <button type="button" aria-label="Layers" className="absolute right-[25px] bottom-6">
        <svg viewBox="0 0 20 18" className="h-[18px] w-5" fill="#00ae42">
          <path d="M10 0 20 5 10 10 0 5zM0 8.500 2 7.500l8 4 8-4 2 1-10 5.500zM0 12.500l2-1 8 4 8-4 2 1L10 18z" />
        </svg>
      </button>
    </main>
  );
}

export default function App() {
  return (
    <div className="flex h-screen flex-col overflow-hidden bg-[#222] font-['Noto_Sans',sans-serif]">
      <div className="h-[3px] bg-linear-to-r from-[#6660b4] via-[#6f93b2] to-[#2c50a0]" />
      <div className="flex min-h-0 flex-1">
        <div className="relative w-[11px] shrink-0 bg-linear-to-b from-[#4530b0] via-[#8430a4] to-[#6a2c9c]">
          <svg viewBox="0 0 14 16" className="absolute -top-1 left-0 z-10 h-4 w-3.5">
            <path d="M0 1l8 9-4 3h9V4L10 8 3 0z" fill="#fff" stroke="#222" strokeWidth=".8" />
          </svg>
        </div>
        <div className="mr-0.5 flex min-w-0 flex-1 flex-col">
          <TitleBar />
          <NavBar />
          <div className="flex min-h-0 flex-1">
            <Sidebar />
            <div className="w-1.5 shrink-0 bg-[#cecece]" />
            <Viewport />
          </div>
        </div>
      </div>
      <div className="h-0.5 bg-linear-to-r from-[#8a4fa8] from-20% via-[#6a6a9a] to-[#2a2a2a] to-55%" />
    </div>
  );
}
